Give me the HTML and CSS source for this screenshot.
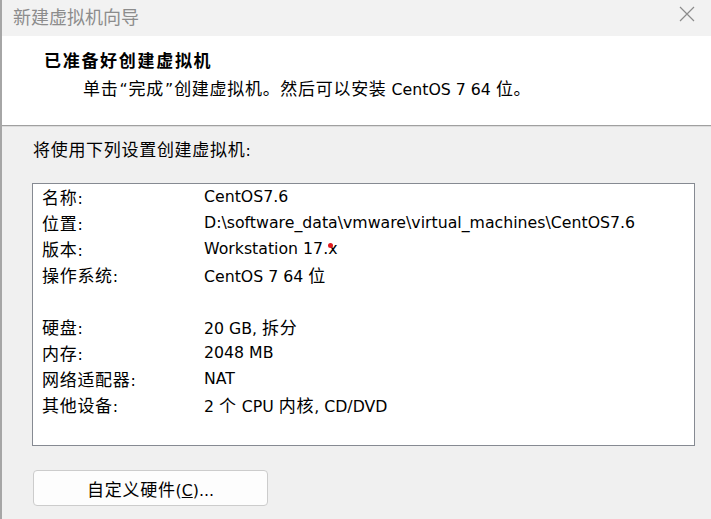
FILE: index.html
```html
<!DOCTYPE html>
<html lang="zh-CN">
<head>
<meta charset="utf-8">
<title>新建虚拟机向导</title>
<link rel="stylesheet" href="styles.css">
</head>
<body>
<div class="window">
  <div class="titlebar">
    <span class="title">新建虚拟机向导</span>
    <svg class="close" width="16" height="16" viewBox="0 0 16 16"><path d="M1 1L15 15M15 1L1 15" stroke="#8c8c8c" stroke-width="1.2" fill="none"/></svg>
  </div>
  <div class="header">
    <div class="heading">已准备好创建虚拟机</div>
    <div class="subtext"><span class="cj">单击</span><span class="q">“</span><span class="cj">完成</span><span class="q">”</span><span class="cj">创建虚拟机。然后可以安装</span> CentOS 7 64 <span class="cj">位。</span></div>
  </div>
  <div class="body">
    <div class="intro"><span class="cj">将使用下列设置创建虚拟机</span>:</div>
    <div class="summary">
      <div class="row"><span class="label"><span class="cj">名称</span>:</span><span class="value">CentOS7.6</span></div>
      <div class="row"><span class="label"><span class="cj">位置</span>:</span><span class="value">D:\software_data\vmware\virtual_machines\CentOS7.6</span></div>
      <div class="row"><span class="label"><span class="cj">版本</span>:</span><span class="value marked">Workstation 17.x<span class="dot"></span></span></div>
      <div class="row"><span class="label"><span class="cj">操作系统</span>:</span><span class="value">CentOS 7 64 <span class="cj">位</span></span></div>
      <div class="row"></div>
      <div class="row"><span class="label"><span class="cj">硬盘</span>:</span><span class="value">20 GB, <span class="cj">拆分</span></span></div>
      <div class="row"><span class="label"><span class="cj">内存</span>:</span><span class="value">2048 MB</span></div>
      <div class="row"><span class="label"><span class="cj">网络适配器</span>:</span><span class="value">NAT</span></div>
      <div class="row"><span class="label"><span class="cj">其他设备</span>:</span><span class="value">2 <span class="cj">个</span> CPU <span class="cj">内核</span>, CD/DVD</span></div>
    </div>
    <button class="btn"><span class="cj">自定义硬件</span>(<u>C</u>)...</button>
  </div>
</div>
</body>
</html>
```

FILE: styles.css
```css
html, body {
  margin: 0;
  padding: 0;
  background: #f0f0f0;
}
body {
  font-family: "DejaVu Sans", "Noto Sans CJK SC", sans-serif;
  font-size: 15.75px;
  color: #000;
}
.cj {
  font-family: "Noto Sans CJK SC", sans-serif;
  font-size: 17px;
  letter-spacing: 0.7px;
}
.q {
  padding: 0 1px;
}
.window {
  width: 711px;
  height: 519px;
  box-sizing: border-box;
  border-left: 2px solid #a6a6a6;
  display: flex;
  flex-direction: column;
}
.titlebar {
  height: 36px;
  background: #f2f2f2;
  display: flex;
  justify-content: space-between;
  align-items: flex-start;
  padding: 0 16px 0 11px;
}
.title {
  font-family: "Noto Sans CJK SC", sans-serif;
  font-size: 18px;
  line-height: 32px;
  color: #8c8c8c;
}
.close {
  margin-top: 6px;
}
.header {
  background: #fff;
  height: 90px;
  box-sizing: border-box;
  padding: 14px 0 0 42px;
  border-bottom: 1px solid #a0a0a0;
  box-shadow: 0 1px 0 #dcdcdc;
}
.heading {
  font-family: "Noto Sans CJK SC", sans-serif;
  font-size: 17px;
  font-weight: bold;
  letter-spacing: 1.7px;
  line-height: 20px;
}
.subtext {
  margin: 8px 0 0 39px;
  line-height: 20px;
}
.body {
  padding: 13px 16px 0 30px;
}
.intro {
  line-height: 20px;
  padding-left: 1px;
}
.summary {
  margin-top: 22px;
  height: 263px;
  box-sizing: border-box;
  background: #fff;
  border: 1px solid #868a92;
  padding: 0 0 0 9px;
}
.row {
  display: flex;
  height: 26px;
  line-height: 26px;
}
.label {
  width: 162px;
  flex: none;
}
.value {
  white-space: nowrap;
}
.marked {
  position: relative;
}
.dot {
  position: absolute;
  left: 124px;
  top: 7px;
  width: 5px;
  height: 5px;
  border-radius: 50%;
  background: #e0191e;
}
.btn {
  margin: 24px 0 0 1px;
  width: 235px;
  height: 36px;
  background: #fdfdfd;
  border: 1px solid #cccccc;
  border-radius: 4px;
  font-family: "DejaVu Sans", "Noto Sans CJK SC", sans-serif;
  font-size: 15.75px;
  color: #000;
  padding: 0;
}
```
